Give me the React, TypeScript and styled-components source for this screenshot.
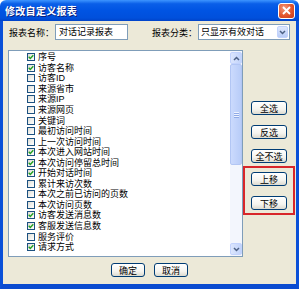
import { createGlobalStyle, styled } from 'styled-components';

const GlobalStyle = createGlobalStyle`
  html, body {
    margin: 0;
    padding: 0;
    background: #ffffff;
    overflow: hidden;
  }
  body {
    font-family: "Liberation Sans", "Noto Sans CJK SC", sans-serif;
  }
`;

const fields = [
  { label: '序号', checked: true },
  { label: '访客名称', checked: true },
  { label: '访客ID', checked: false },
  { label: '来源省市', checked: false },
  { label: '来源IP', checked: false },
  { label: '来源网页', checked: false },
  { label: '关键词', checked: false },
  { label: '最初访问时间', checked: false },
  { label: '上一次访问时间', checked: false },
  { label: '本次进入网站时间', checked: true },
  { label: '本次访问停留总时间', checked: true },
  { label: '开始对话时间', checked: true },
  { label: '累计来访次数', checked: false },
  { label: '本次之前已访问的页数', checked: false },
  { label: '本次访问页数', checked: false },
  { label: '访客发送消息数', checked: true },
  { label: '客服发送信息数', checked: true },
  { label: '服务评价', checked: false },
  { label: '请求方式', checked: true },
];

export default function App() {
  return (
    <>
      <GlobalStyle />
      <Window>
        <TitleBar>
          <Title>修改自定义报表</Title>
          <CloseButton>
            <svg width="9" height="9" viewBox="0 0 9 9">
              <path d="M1 1 L8 8 M8 1 L1 8" stroke="#fff" strokeWidth="1.8" />
            </svg>
          </CloseButton>
        </TitleBar>
        <Body>
          <FormRow>
            <Label>报表名称：</Label>
            <TextBox>对话记录报表</TextBox>
            <Label $space>报表分类：</Label>
            <Select>
              <SelectText>只显示有效对话</SelectText>
              <ArrowButton>
                <Chevron down />
              </ArrowButton>
            </Select>
          </FormRow>
          <MainRow>
            <ListBox>
              <Items>
                {fields.map((f) => (
                  <Item key={f.label}>
                    <CheckBox>
                      {f.checked && (
                        <svg width="6" height="6" viewBox="0 0 6 6">
                          <path
                            d="M0.7 2.8 L2.3 4.5 L5.3 1.2"
                            fill="none"
                            stroke="#21a121"
                            strokeWidth="1.4"
                          />
                        </svg>
                      )}
                    </CheckBox>
                    {f.label}
                  </Item>
                ))}
              </Items>
              <ScrollBar>
                <ScrollButton>
                  <Chevron />
                </ScrollButton>
                <Track>
                  <Thumb>
                    <Grip />
                  </Thumb>
                </Track>
                <ScrollButton>
                  <Chevron down />
                </ScrollButton>
              </ScrollBar>
            </ListBox>
            <SideColumn>
              <Button>全选</Button>
              <Button>反选</Button>
              <Button>全不选</Button>
              <Highlight>
                <Button>上移</Button>
                <Button>下移</Button>
              </Highlight>
            </SideColumn>
          </MainRow>
          <Footer>
            <Button $wide>确定</Button>
            <Button $wide>取消</Button>
          </Footer>
        </Body>
      </Window>
    </>
  );
}

function Chevron({ down }: { down?: boolean }) {
  return (
    <svg width="7" height="5" viewBox="0 0 7 5">
      <path
        d={down ? 'M1 1 L3.5 3.5 L6 1' : 'M1 4 L3.5 1.5 L6 4'}
        fill="none"
        stroke="#4d6185"
        strokeWidth="1.5"
      />
    </svg>
  );
}

const Window = styled.div`
  width: 299px;
  height: 289px;
  display: flex;
  flex-direction: column;
  box-sizing: border-box;
`;

const TitleBar = styled.div`
  height: 21px;
  flex-shrink: 0;
  display: flex;
  align-items: center;
  justify-content: space-between;
  padding: 0 4px 0 5px;
  border-radius: 6px 6px 0 0;
  background: linear-gradient(
    to bottom,
    #3d95ff 0%,
    #0a5fe8 18%,
    #0054e3 50%,
    #0050dc 85%,
    #0043c9 100%
  );
`;

const Title = styled.span`
  color: #ffffff;
  font-size: 10px;
  font-weight: bold;
  letter-spacing: 0.3px;
  text-shadow: 1px 1px 0 #0a1f7a;
`;

const CloseButton = styled.div`
  width: 15px;
  height: 14px;
  display: flex;
  align-items: center;
  justify-content: center;
  border: 1px solid #ffffff;
  border-radius: 3px;
  background: radial-gradient(circle at 35% 30%, #f29a7c 0%, #e2552c 55%, #c4391a 100%);
`;

const Body = styled.div`
  flex: 1;
  display: flex;
  flex-direction: column;
  background: #ece9d8;
  border-left: 3px solid #0a50d8;
  border-right: 3px solid #0a50d8;
  border-bottom: 5px solid #0a4bd0;
  padding: 3px 0 0 5px;
`;

const FormRow = styled.div`
  display: flex;
  align-items: center;
  height: 16px;
`;

const Label = styled.span<{ $space?: boolean }>`
  font-size: 9px;
  color: #000000;
  margin-left: ${(p) => (p.$space ? '24px' : '1px')};
  width: 46px;
  white-space: nowrap;
`;

const TextBox = styled.div`
  width: 73px;
  height: 16px;
  box-sizing: border-box;
  border: 1px solid #7f9db9;
  background: #ffffff;
  font-size: 9px;
  line-height: 14px;
  padding-left: 3px;
  color: #000000;
`;

const Select = styled.div`
  width: 92px;
  height: 16px;
  box-sizing: border-box;
  border: 1px solid #7f9db9;
  background: #ffffff;
  display: flex;
  align-items: stretch;
`;

const SelectText = styled.span`
  flex: 1;
  font-size: 9px;
  line-height: 14px;
  padding-left: 2px;
  color: #000000;
`;

const ArrowButton = styled.div`
  width: 11px;
  margin: 1px;
  display: flex;
  align-items: center;
  justify-content: center;
  border-radius: 2px;
  background: linear-gradient(to bottom, #dfe8fd, #b9cdf8);
  border: 1px solid #c3d3fd;
  box-sizing: border-box;
`;

const MainRow = styled.div`
  display: flex;
  margin-top: 10px;
  height: 207px;
`;

const ListBox = styled.div`
  width: 235px;
  box-sizing: border-box;
  border: 1px solid #7f9db9;
  background: #ffffff;
  display: flex;
`;

const Items = styled.div`
  flex: 1;
  padding: 1px 0 0 18px;
`;

const Item = styled.div`
  height: 10.55px;
  display: flex;
  align-items: center;
  gap: 3px;
  font-size: 9px;
  line-height: 10px;
  color: #000000;
  white-space: nowrap;
`;

const CheckBox = styled.span`
  width: 8px;
  height: 8px;
  box-sizing: border-box;
  border: 1px solid #1c5180;
  background: linear-gradient(135deg, #dcdcd6 0%, #f4f4f0 60%, #ffffff 100%);
  display: flex;
  align-items: center;
  justify-content: center;
  flex-shrink: 0;
`;

const ScrollBar = styled.div`
  width: 12px;
  display: flex;
  flex-direction: column;
  background: #f3f6fd;
  padding: 1px 0;
`;

const ScrollButton = styled.div`
  height: 12px;
  box-sizing: border-box;
  display: flex;
  align-items: center;
  justify-content: center;
  border: 1px solid #c3d3fd;
  border-radius: 2px;
  background: linear-gradient(to right, #dce6fd, #c1d3fb);
`;

const Track = styled.div`
  flex: 1;
  display: flex;
  flex-direction: column;
  padding-bottom: 78px;
`;

const Thumb = styled.div`
  flex: 1;
  box-sizing: border-box;
  border: 1px solid #b2c6f4;
  border-radius: 2px;
  background: linear-gradient(to right, #cbdafd, #b8ccf8);
  display: flex;
  align-items: center;
  justify-content: center;
`;

const Grip = styled.div`
  width: 5px;
  height: 6px;
  background: repeating-linear-gradient(
    to bottom,
    #eef3ff 0px,
    #eef3ff 1px,
    #8fa9e6 1px,
    #8fa9e6 2px
  );
`;

const SideColumn = styled.div`
  width: 52px;
  display: flex;
  flex-direction: column;
  align-items: center;
  padding-top: 51px;
  gap: 10px;
`;

const Highlight = styled.div`
  margin-top: -7px;
  width: 52px;
  box-sizing: border-box;
  border: 2px solid #d8262a;
  padding: 4px 0 3px;
  display: flex;
  flex-direction: column;
  align-items: center;
  gap: 10px;
`;

const Button = styled.div<{ $wide?: boolean }>`
  width: ${(p) => (p.$wide ? '34px' : '36px')};
  height: 14px;
  box-sizing: border-box;
  border: 1px solid #003c74;
  border-radius: 3px;
  background: linear-gradient(to bottom, #ffffff 0%, #f5f4ef 60%, #dcdad0 100%);
  display: flex;
  align-items: center;
  justify-content: center;
  font-size: 9px;
  color: #000000;
  white-space: nowrap;
`;

const Footer = styled.div`
  display: flex;
  justify-content: center;
  gap: 9px;
  margin-top: 6px;
  padding-right: 5px;
`;
